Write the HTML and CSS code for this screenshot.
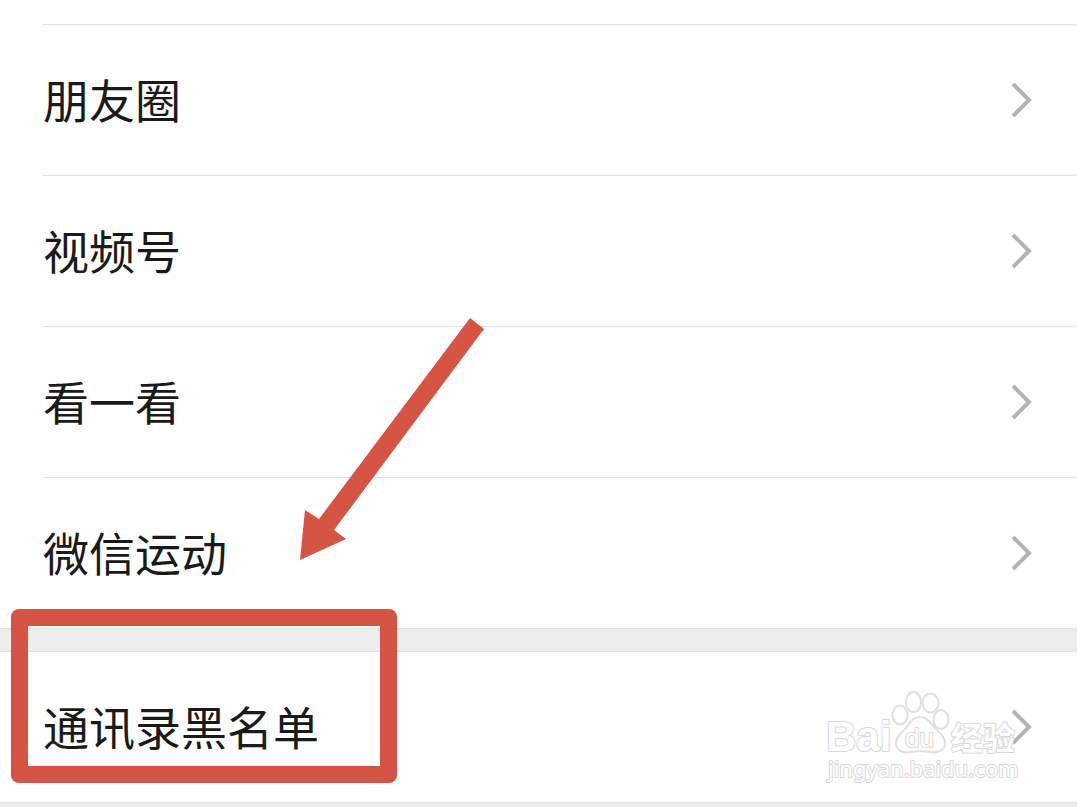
FILE: index.html
```html
<!DOCTYPE html>
<html lang="zh-CN">
<head>
<meta charset="utf-8">
<meta name="viewport" content="width=device-width, initial-scale=1">
<title>朋友权限</title>
<link rel="stylesheet" href="styles.css">
</head>
<body>
<main class="settings">
  <nav class="group">
    <a class="row" href="#moments"><span class="label">朋友圈</span><svg class="chevron" viewBox="0 0 22 36" aria-hidden="true"><path d="M2 2 18 18 2 34"/></svg></a>
    <a class="row" href="#channels"><span class="label">视频号</span><svg class="chevron" viewBox="0 0 22 36" aria-hidden="true"><path d="M2 2 18 18 2 34"/></svg></a>
    <a class="row" href="#top-stories"><span class="label">看一看</span><svg class="chevron" viewBox="0 0 22 36" aria-hidden="true"><path d="M2 2 18 18 2 34"/></svg></a>
    <a class="row" href="#werun"><span class="label">微信运动</span><svg class="chevron" viewBox="0 0 22 36" aria-hidden="true"><path d="M2 2 18 18 2 34"/></svg></a>
  </nav>
  <nav class="group group-last">
    <a class="row" href="#blocked"><span class="label">通讯录黑名单</span><svg class="chevron" viewBox="0 0 22 36" aria-hidden="true"><path d="M2 2 18 18 2 34"/></svg></a>
  </nav>
  <svg class="arrow" viewBox="0 0 186 244" aria-hidden="true"><path d="M171 1 185 12 35 213 47 222 1 243 6 193 20 202Z"/></svg>
  <div class="highlight"></div>
  <svg class="watermark" viewBox="0 0 200 96" role="img" aria-label="Baidu 经验 jingyan.baidu.com">
    <text class="brand" x="1" y="61">Bai</text>
    <g class="paw">
      <ellipse cx="75" cy="25" rx="7.5" ry="9.5"/>
      <ellipse cx="88.500" cy="12" rx="7.500" ry="10"/>
      <ellipse cx="105.500" cy="13" rx="8" ry="9.500"/>
      <ellipse cx="116" cy="29.500" rx="7.500" ry="9.500"/>
      <path d="M95 27C86 27 84 36 78 41C71 47 69 54 73 59C78 65 86 61 95 61C104 61 112 65 118 59C122 54 120 47 113 41C107 36 104 27 95 27Z"/>
    </g>
    <text class="du" x="80" y="57">du</text>
    <text class="product" x="126" y="60">经验</text>
    <text class="site" x="3" y="87">jingyan.baidu.com</text>
  </svg>
</main>
</body>
</html>
```
FILE: styles.css
```css
* {
  box-sizing: border-box;
}

body {
  margin: 0;
  background: #ededed;
  color: #1a1a1a;
  font-family: "Noto Sans CJK SC", sans-serif;
}

.settings {
  position: relative;
  overflow: hidden;
}

.group {
  background: #fefefe;
  padding: 24px 0 0 43px;
  border-bottom: 1px solid #e2e2e2;
}

.group-last {
  margin-top: 22px;
  padding-top: 0;
}

.row {
  display: flex;
  align-items: center;
  justify-content: space-between;
  height: 151px;
  padding-right: 44px;
  border-top: 1px solid #e2e2e2;
  color: inherit;
  font-size: 46px;
  line-height: 68px;
  text-decoration: none;
}

.label {
  padding-bottom: 4px;
}

.group-last .row {
  margin-left: -43px;
  padding-left: 43px;
}

.chevron {
  width: 22px;
  height: 36px;
  fill: none;
  stroke: #b3b3b3;
  stroke-width: 4;
}

.arrow {
  position: absolute;
  left: 299px;
  top: 317px;
  width: 186px;
  height: 244px;
  fill: #d65444;
}

.highlight {
  position: absolute;
  left: 11px;
  top: 609px;
  width: 386px;
  height: 174px;
  border: 17px solid #d65444;
  border-radius: 8px;
}

.watermark {
  position: absolute;
  right: 52px;
  top: 690px;
  width: 200px;
  height: 96px;
  fill: #fefefe;
  stroke: #d9d9d9;
}

.paw {
  stroke: #e0e0e0;
  stroke-width: 2;
}

.brand,
.du,
.product,
.site {
  paint-order: stroke;
  stroke-width: 2;
  stroke-linejoin: round;
}

.brand {
  font: 700 42px "Liberation Sans", sans-serif;
}

.du {
  font: 400 26px "Liberation Sans", sans-serif;
}

.product {
  font: 700 32px "Noto Sans CJK SC", sans-serif;
}

.site {
  font: 400 22px "Noto Sans", sans-serif;
}
```
